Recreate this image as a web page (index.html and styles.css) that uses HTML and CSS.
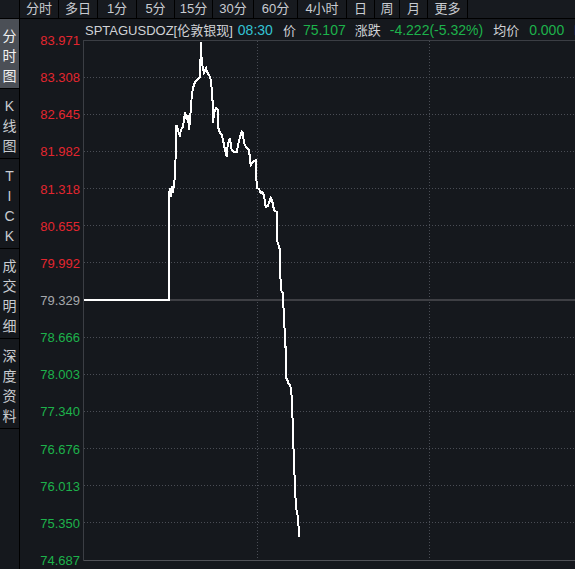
FILE: index.html
```html
<!DOCTYPE html>
<html lang="zh-CN">
<head>
<meta charset="utf-8">
<title>SPTAGUSDOZ 分时</title>
<link rel="stylesheet" href="styles.css">
</head>
<body>
<div class="app">
  <div class="tabs">
    <div class="tab"></div>
    <div class="tab">分时</div>
    <div class="tab">多日</div>
    <div class="tab">1分</div>
    <div class="tab">5分</div>
    <div class="tab">15分</div>
    <div class="tab">30分</div>
    <div class="tab">60分</div>
    <div class="tab">4小时</div>
    <div class="tab">日</div>
    <div class="tab">周</div>
    <div class="tab">月</div>
    <div class="tab">更多</div>
  </div>
  <div class="main">
    <div class="side">
      <div class="side-item active"><span>分</span><span>时</span><span>图</span></div>
      <div class="side-item"><span>K</span><span>线</span><span>图</span></div>
      <div class="side-item"><span>T</span><span>I</span><span>C</span><span>K</span></div>
      <div class="side-item"><span>成</span><span>交</span><span>明</span><span>细</span></div>
      <div class="side-item"><span>深</span><span>度</span><span>资</span><span>料</span></div>
    </div>
    <div class="axis">
      <span class="up">83.971</span>
      <span class="up">83.308</span>
      <span class="up">82.645</span>
      <span class="up">81.982</span>
      <span class="up">81.318</span>
      <span class="up">80.655</span>
      <span class="up">79.992</span>
      <span class="flat">79.329</span>
      <span class="down">78.666</span>
      <span class="down">78.003</span>
      <span class="down">77.340</span>
      <span class="down">76.676</span>
      <span class="down">76.013</span>
      <span class="down">75.350</span>
      <span class="down">74.687</span>
    </div>
    <div class="chart">
      <div class="info">
        <span class="name">SPTAGUSDOZ[伦敦银现]</span>
        <span class="num time">08:30</span>
        <span class="label gap10">价</span>
        <span class="num down gap7">75.107</span>
        <span class="label gap9">涨跌</span>
        <span class="num down gap9">-4.222(-5.32%)</span>
        <span class="label gap10">均价</span>
        <span class="num down gap10">0.000</span>
        <span class="label gap10">昨收</span>
      </div>
      <svg class="plot" viewBox="0 0 492 521" width="492" height="521">
        <g class="grid">
          <line x1="1" y1="37.5" x2="492" y2="37.5"/>
          <line x1="1" y1="74.5" x2="492" y2="74.5"/>
          <line x1="1" y1="111.5" x2="492" y2="111.5"/>
          <line x1="1" y1="148.5" x2="492" y2="148.5"/>
          <line x1="1" y1="185.5" x2="492" y2="185.5"/>
          <line x1="1" y1="222.5" x2="492" y2="222.5"/>
          <line x1="1" y1="297.5" x2="492" y2="297.5"/>
          <line x1="1" y1="334.5" x2="492" y2="334.5"/>
          <line x1="1" y1="371.5" x2="492" y2="371.5"/>
          <line x1="1" y1="408.5" x2="492" y2="408.5"/>
          <line x1="1" y1="445.5" x2="492" y2="445.5"/>
          <line x1="1" y1="482.5" x2="492" y2="482.5"/>
          <line x1="174.5" y1="1" x2="174.5" y2="520"/>
          <line x1="346.5" y1="1" x2="346.5" y2="520"/>
        </g>
        <line class="frame-top" x1="0" y1="0.5" x2="492" y2="0.5"/>
        <line class="frame-bottom" x1="0" y1="520.5" x2="492" y2="520.5"/>
        <line class="frame-left" x1="0.5" y1="0" x2="0.5" y2="521"/>
        <line class="base" x1="1" y1="260" x2="492" y2="260"/>
        <polyline class="price" points="1,260 86,260 86,155 87,148 88,157 89,146 90,153 91,144 92,137 93.5,85 95,90 97,97 97.7,90 100,87 102,72 103.7,80 105,75 106,90 107,80 108.7,57 110,48 112,42 115,39 117,37 118,2 118.7,23 119.7,27 121,33 123,28 124,32 126,35 128,40 129.7,63 130,83 131,73 133,68 134.7,70 135,87 137,93 138.7,95 140,100 142,110 143.7,117 144.7,105 147,98 148.7,110 151,112 153.7,112 155,105 157,97 158.7,92 159.7,93 161,103 163.7,108 166,110 167.7,125 169.7,122 173,120 173.7,148 176,149 177.7,153 179,152 181,155 182.7,167 184.7,166 186,163 187.7,158 189,160 191,170 193.7,172 194,200 196,207 197,210 197,230 198,247 198.7,252 199.7,253 200.3,265 201.3,280 202,307 202.7,307 203,338 204.3,340 205.3,343 207,345 207.7,348 208.7,357 209.3,370 210,395 211,422 212,447 213,468 214.3,473 215.3,483 216.3,497"/>
      </svg>
    </div>
  </div>
</div>
</body>
</html>
```

FILE: styles.css
```css
* {
  box-sizing: border-box;
}

html, body {
  margin: 0;
  padding: 0;
  background: #15181d;
}

body {
  font-family: "Liberation Sans", "Noto Sans CJK SC", sans-serif;
  color: #c9ccd1;
}

.app {
  width: 575px;
  height: 569px;
  overflow: hidden;
  background: #15181d;
}

.tabs {
  display: grid;
  grid-template-columns: 20px 39px 39px 39px 38px 38px 41px 44px 49px 28px 25px 28px 40px;
  height: 19px;
  border-bottom: 1px solid #000;
  background: #171a1f;
}

.tab {
  border-right: 1px solid #000;
  text-align: center;
  font-size: 13px;
  line-height: 18px;
  color: #c9ccd1;
  white-space: nowrap;
}

.main {
  display: grid;
  grid-template-columns: 20px 63px 1fr;
  height: 550px;
}

.side {
  display: flex;
  flex-direction: column;
  border-right: 1px solid #000;
  background: #15181d;
}

.side-item {
  display: flex;
  flex-direction: column;
  align-items: center;
  padding: 7px 0 2px;
  border-bottom: 1px solid #000;
  font-size: 14px;
  line-height: 20px;
  color: #c9ccd1;
}

.side-item.active {
  background: #4b4f56;
  color: #f2f2f2;
}

.axis {
  display: grid;
  grid-template-rows: repeat(15, 37.143px);
  align-items: center;
  padding-top: 3px;
  padding-right: 3px;
  text-align: right;
  font-size: 13px;
}

.up {
  color: #e3262f;
}

.down {
  color: #1db24b;
}

.flat {
  color: #a6a8ac;
}

.chart {
  display: flex;
  flex-direction: column;
  min-width: 0;
  overflow: hidden;
}

.info {
  display: flex;
  align-items: center;
  height: 21px;
  padding-left: 2px;
  white-space: nowrap;
  overflow: hidden;
  font-size: 13px;
  color: #d0d2d6;
}

.info .num {
  font-size: 14px;
}

.info .name {
  color: #d0d2d6;
}

.info .time {
  margin-left: 5px;
  color: #33c2d3;
}

.gap7 {
  margin-left: 7px;
}

.gap9 {
  margin-left: 9px;
}

.gap10 {
  margin-left: 10px;
}

.plot {
  display: block;
  flex: none;
}

.grid line {
  stroke: #4a4d55;
  stroke-width: 1;
  stroke-dasharray: 1 2;
}

.frame-top {
  stroke: #3b3e44;
  stroke-width: 1;
}

.frame-bottom {
  stroke: #505257;
  stroke-width: 1;
}

.frame-left {
  stroke: #3b3e44;
  stroke-width: 1;
}

.base {
  stroke: #3e3f44;
  stroke-width: 2;
}

.price {
  fill: none;
  stroke: #ffffff;
  stroke-width: 2;
  stroke-linejoin: miter;
  shape-rendering: crispEdges;
}
```
